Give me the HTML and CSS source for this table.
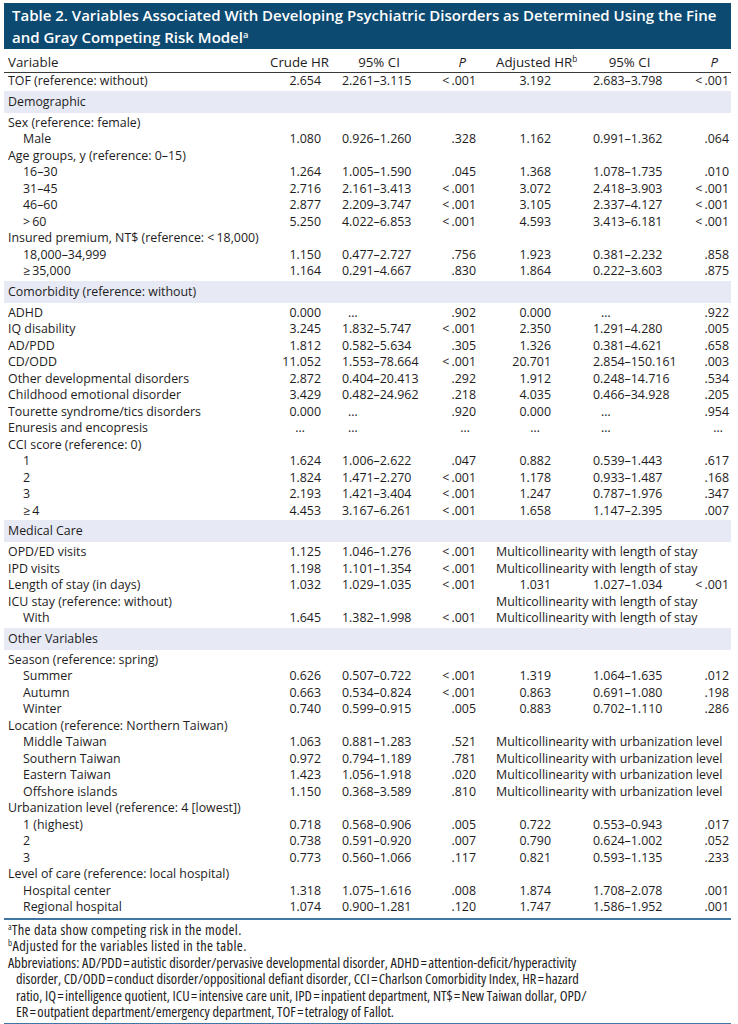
FILE: index.html
```html
<!DOCTYPE html>
<html lang="en">
<head>
<meta charset="utf-8">
<title>Table 2</title>
<link rel="stylesheet" href="styles.css">
</head>
<body>
<div class="page">
  <h1 class="title">Table 2. Variables Associated With Developing Psychiatric Disorders as Determined Using the Fine and Gray Competing Risk Model<sup>a</sup></h1>

  <div class="row head">
    <span class="lab">Variable</span>
    <span class="c2">Crude HR</span>
    <span class="c3">95% CI</span>
    <span class="c4"><i>P</i></span>
    <span class="c5">Adjusted HR<sup>b</sup></span>
    <span class="c6">95% CI</span>
    <span class="c7"><i>P</i></span>
  </div>

  <div class="row"><span class="lab">TOF (reference: without)</span><span class="c2">2.654</span><span class="c3">2.261–3.115</span><span class="c4">&lt;&thinsp;.001</span><span class="c5">3.192</span><span class="c6">2.683–3.798</span><span class="c7">&lt;&thinsp;.001</span></div>

  <div class="band">Demographic</div>
  <div class="row"><span class="lab">Sex (reference: female)</span></div>
  <div class="row"><span class="lab sub">Male</span><span class="c2">1.080</span><span class="c3">0.926–1.260</span><span class="c4">.328</span><span class="c5">1.162</span><span class="c6">0.991–1.362</span><span class="c7">.064</span></div>
  <div class="row"><span class="lab">Age groups, y (reference: 0–15)</span></div>
  <div class="row"><span class="lab sub">16–30</span><span class="c2">1.264</span><span class="c3">1.005–1.590</span><span class="c4">.045</span><span class="c5">1.368</span><span class="c6">1.078–1.735</span><span class="c7">.010</span></div>
  <div class="row"><span class="lab sub">31–45</span><span class="c2">2.716</span><span class="c3">2.161–3.413</span><span class="c4">&lt;&thinsp;.001</span><span class="c5">3.072</span><span class="c6">2.418–3.903</span><span class="c7">&lt;&thinsp;.001</span></div>
  <div class="row"><span class="lab sub">46–60</span><span class="c2">2.877</span><span class="c3">2.209–3.747</span><span class="c4">&lt;&thinsp;.001</span><span class="c5">3.105</span><span class="c6">2.337–4.127</span><span class="c7">&lt;&thinsp;.001</span></div>
  <div class="row"><span class="lab sub">&gt;&thinsp;60</span><span class="c2">5.250</span><span class="c3">4.022–6.853</span><span class="c4">&lt;&thinsp;.001</span><span class="c5">4.593</span><span class="c6">3.413–6.181</span><span class="c7">&lt;&thinsp;.001</span></div>
  <div class="row"><span class="lab">Insured premium, NT$ (reference: &lt;&thinsp;18,000)</span></div>
  <div class="row"><span class="lab sub">18,000–34,999</span><span class="c2">1.150</span><span class="c3">0.477–2.727</span><span class="c4">.756</span><span class="c5">1.923</span><span class="c6">0.381–2.232</span><span class="c7">.858</span></div>
  <div class="row"><span class="lab sub">≥&thinsp;35,000</span><span class="c2">1.164</span><span class="c3">0.291–4.667</span><span class="c4">.830</span><span class="c5">1.864</span><span class="c6">0.222–3.603</span><span class="c7">.875</span></div>

  <div class="band">Comorbidity (reference: without)</div>
  <div class="row"><span class="lab">ADHD</span><span class="c2">0.000</span><span class="c3 el">…</span><span class="c4">.902</span><span class="c5">0.000</span><span class="c6 el">…</span><span class="c7">.922</span></div>
  <div class="row"><span class="lab">IQ disability</span><span class="c2">3.245</span><span class="c3">1.832–5.747</span><span class="c4">&lt;&thinsp;.001</span><span class="c5">2.350</span><span class="c6">1.291–4.280</span><span class="c7">.005</span></div>
  <div class="row"><span class="lab">AD/PDD</span><span class="c2">1.812</span><span class="c3">0.582–5.634</span><span class="c4">.305</span><span class="c5">1.326</span><span class="c6">0.381–4.621</span><span class="c7">.658</span></div>
  <div class="row"><span class="lab">CD/ODD</span><span class="c2">11.052</span><span class="c3">1.553–78.664</span><span class="c4">&lt;&thinsp;.001</span><span class="c5">20.701</span><span class="c6">2.854–150.161</span><span class="c7">.003</span></div>
  <div class="row"><span class="lab">Other developmental disorders</span><span class="c2">2.872</span><span class="c3">0.404–20.413</span><span class="c4">.292</span><span class="c5">1.912</span><span class="c6">0.248–14.716</span><span class="c7">.534</span></div>
  <div class="row"><span class="lab">Childhood emotional disorder</span><span class="c2">3.429</span><span class="c3">0.482–24.962</span><span class="c4">.218</span><span class="c5">4.035</span><span class="c6">0.466–34.928</span><span class="c7">.205</span></div>
  <div class="row"><span class="lab">Tourette syndrome/tics disorders</span><span class="c2">0.000</span><span class="c3 el">…</span><span class="c4">.920</span><span class="c5">0.000</span><span class="c6 el">…</span><span class="c7">.954</span></div>
  <div class="row"><span class="lab">Enuresis and encopresis</span><span class="c2 elc">…</span><span class="c3 el">…</span><span class="c4 elp">…</span><span class="c5 ela">…</span><span class="c6 el">…</span><span class="c7 elp">…</span></div>
  <div class="row"><span class="lab">CCI score (reference: 0)</span></div>
  <div class="row"><span class="lab sub">1</span><span class="c2">1.624</span><span class="c3">1.006–2.622</span><span class="c4">.047</span><span class="c5">0.882</span><span class="c6">0.539–1.443</span><span class="c7">.617</span></div>
  <div class="row"><span class="lab sub">2</span><span class="c2">1.824</span><span class="c3">1.471–2.270</span><span class="c4">&lt;&thinsp;.001</span><span class="c5">1.178</span><span class="c6">0.933–1.487</span><span class="c7">.168</span></div>
  <div class="row"><span class="lab sub">3</span><span class="c2">2.193</span><span class="c3">1.421–3.404</span><span class="c4">&lt;&thinsp;.001</span><span class="c5">1.247</span><span class="c6">0.787–1.976</span><span class="c7">.347</span></div>
  <div class="row"><span class="lab sub">≥&thinsp;4</span><span class="c2">4.453</span><span class="c3">3.167–6.261</span><span class="c4">&lt;&thinsp;.001</span><span class="c5">1.658</span><span class="c6">1.147–2.395</span><span class="c7">.007</span></div>

  <div class="band">Medical Care</div>
  <div class="row"><span class="lab">OPD/ED visits</span><span class="c2">1.125</span><span class="c3">1.046–1.276</span><span class="c4">&lt;&thinsp;.001</span><span class="multi">Multicollinearity with length of stay</span></div>
  <div class="row"><span class="lab">IPD visits</span><span class="c2">1.198</span><span class="c3">1.101–1.354</span><span class="c4">&lt;&thinsp;.001</span><span class="multi">Multicollinearity with length of stay</span></div>
  <div class="row"><span class="lab">Length of stay (in days)</span><span class="c2">1.032</span><span class="c3">1.029–1.035</span><span class="c4">&lt;&thinsp;.001</span><span class="c5">1.031</span><span class="c6">1.027–1.034</span><span class="c7">&lt;&thinsp;.001</span></div>
  <div class="row"><span class="lab">ICU stay (reference: without)</span><span class="multi">Multicollinearity with length of stay</span></div>
  <div class="row"><span class="lab sub">With</span><span class="c2">1.645</span><span class="c3">1.382–1.998</span><span class="c4">&lt;&thinsp;.001</span><span class="multi">Multicollinearity with length of stay</span></div>

  <div class="band">Other Variables</div>
  <div class="row"><span class="lab">Season (reference: spring)</span></div>
  <div class="row"><span class="lab sub">Summer</span><span class="c2">0.626</span><span class="c3">0.507–0.722</span><span class="c4">&lt;&thinsp;.001</span><span class="c5">1.319</span><span class="c6">1.064–1.635</span><span class="c7">.012</span></div>
  <div class="row"><span class="lab sub">Autumn</span><span class="c2">0.663</span><span class="c3">0.534–0.824</span><span class="c4">&lt;&thinsp;.001</span><span class="c5">0.863</span><span class="c6">0.691–1.080</span><span class="c7">.198</span></div>
  <div class="row"><span class="lab sub">Winter</span><span class="c2">0.740</span><span class="c3">0.599–0.915</span><span class="c4">.005</span><span class="c5">0.883</span><span class="c6">0.702–1.110</span><span class="c7">.286</span></div>
  <div class="row"><span class="lab">Location (reference: Northern Taiwan)</span></div>
  <div class="row"><span class="lab sub">Middle Taiwan</span><span class="c2">1.063</span><span class="c3">0.881–1.283</span><span class="c4">.521</span><span class="multi">Multicollinearity with urbanization level</span></div>
  <div class="row"><span class="lab sub">Southern Taiwan</span><span class="c2">0.972</span><span class="c3">0.794–1.189</span><span class="c4">.781</span><span class="multi">Multicollinearity with urbanization level</span></div>
  <div class="row"><span class="lab sub">Eastern Taiwan</span><span class="c2">1.423</span><span class="c3">1.056–1.918</span><span class="c4">.020</span><span class="multi">Multicollinearity with urbanization level</span></div>
  <div class="row"><span class="lab sub">Offshore islands</span><span class="c2">1.150</span><span class="c3">0.368–3.589</span><span class="c4">.810</span><span class="multi">Multicollinearity with urbanization level</span></div>
  <div class="row"><span class="lab">Urbanization level (reference: 4 [lowest])</span></div>
  <div class="row"><span class="lab sub">1 (highest)</span><span class="c2">0.718</span><span class="c3">0.568–0.906</span><span class="c4">.005</span><span class="c5">0.722</span><span class="c6">0.553–0.943</span><span class="c7">.017</span></div>
  <div class="row"><span class="lab sub">2</span><span class="c2">0.738</span><span class="c3">0.591–0.920</span><span class="c4">.007</span><span class="c5">0.790</span><span class="c6">0.624–1.002</span><span class="c7">.052</span></div>
  <div class="row"><span class="lab sub">3</span><span class="c2">0.773</span><span class="c3">0.560–1.066</span><span class="c4">.117</span><span class="c5">0.821</span><span class="c6">0.593–1.135</span><span class="c7">.233</span></div>
  <div class="row"><span class="lab">Level of care (reference: local hospital)</span></div>
  <div class="row"><span class="lab sub">Hospital center</span><span class="c2">1.318</span><span class="c3">1.075–1.616</span><span class="c4">.008</span><span class="c5">1.874</span><span class="c6">1.708–2.078</span><span class="c7">.001</span></div>
  <div class="row last"><span class="lab sub">Regional hospital</span><span class="c2">1.074</span><span class="c3">0.900–1.281</span><span class="c4">.120</span><span class="c5">1.747</span><span class="c6">1.586–1.952</span><span class="c7">.001</span></div>

  <div class="notes">
    <p class="fn"><sup>a</sup>The data show competing risk in the model.</p>
    <p class="fn"><sup>b</sup>Adjusted for the variables listed in the table.</p>
    <p class="abbr">Abbreviations: AD/PDD&#8202;=&#8202;autistic disorder/pervasive developmental disorder, ADHD&#8202;=&#8202;attention-deficit/hyperactivity<br>disorder, CD/ODD&#8202;=&#8202;conduct disorder/oppositional defiant disorder, CCI&#8202;=&#8202;Charlson Comorbidity Index, HR&#8202;=&#8202;hazard<br>ratio, IQ&#8202;=&#8202;intelligence quotient, ICU&#8202;=&#8202;intensive care unit, IPD&#8202;=&#8202;inpatient department, NT$&#8202;=&#8202;New Taiwan dollar, OPD/<br>ER&#8202;=&#8202;outpatient department/emergency department, TOF&#8202;=&#8202;tetralogy of Fallot.</p>
  </div>
</div>
</body>
</html>
```

FILE: styles.css
```css
html, body {
  margin: 0;
  padding: 0;
  background: #ffffff;
}

.page {
  width: 727px;
  padding: 3px 0 0 4px;
  font-family: "Open Sans", "Noto Sans", sans-serif;
  font-size: 12.4px;
  color: #1e1c1d;
}

.title {
  margin: 0;
  height: 46px;
  box-sizing: border-box;
  padding: 1px 8px;
  background: #0d4a72;
  color: #ffffff;
  font-size: 15px;
  font-weight: 600;
  line-height: 22px;
}

.title sup,
.head sup,
.notes sup {
  font-size: 0.62em;
  line-height: 0;
  vertical-align: 0.55em;
}

.row {
  display: grid;
  grid-template-columns: 262px 51px 109px 46px 75px 139px 39px;
  padding-left: 4px;
  height: 16.5px;
  line-height: 16.5px;
  white-space: nowrap;
}

.row > span {
  display: block;
}

.lab { grid-column: 1; }
.sub { padding-left: 15px; }
.c2 { grid-column: 2; text-align: right; }
.c3 { grid-column: 3; padding-left: 21px; }
.c4 { grid-column: 4; text-align: right; }
.c5 { grid-column: 5; text-align: right; }
.c6 { grid-column: 6; padding-left: 42px; }
.c7 { grid-column: 7; text-align: right; }

.multi {
  grid-column: 5 / 8;
  padding-left: 20px;
}

.el { padding-left: 27px; }
.c6.el { padding-left: 50px; }
.elc { padding-right: 16px; }
.elp { padding-right: 6px; }
.ela { padding-right: 11px; }

.head {
  height: 24px;
  box-sizing: border-box;
  padding-top: 3px;
  line-height: 20px;
  border-bottom: 1px solid #3a3a3a;
  font-size: 13.3px;
}

.head .c2 { margin-right: -8px; }
.head .c3 { padding-right: 14px; text-align: center; }
.head .c4 { padding-right: 10px; }
.head .c5 { text-align: left; padding-left: 20px; overflow: visible; }
.head .c6 { padding-right: 24px; text-align: center; }
.head .c7 { padding-right: 11px; }

.band {
  margin: 1px 0 2px;
  height: 22px;
  line-height: 22px;
  padding-left: 4px;
  background: #e7eaf5;
}

.row.last {
  height: 18.5px;
  border-bottom: 2px solid #3f76a3;
}

.notes {
  padding: 2px 0 2px 4px;
  border-bottom: 2px solid #3f76a3;
  font-size: 14.4px;
  font-stretch: 75%;
  line-height: 16.5px;
  white-space: nowrap;
}

.notes p {
  margin: 0;
}

.notes .fn {
  letter-spacing: 0.35px;
}

.notes .abbr {
  padding-left: 8px;
  text-indent: -8px;
}
```
